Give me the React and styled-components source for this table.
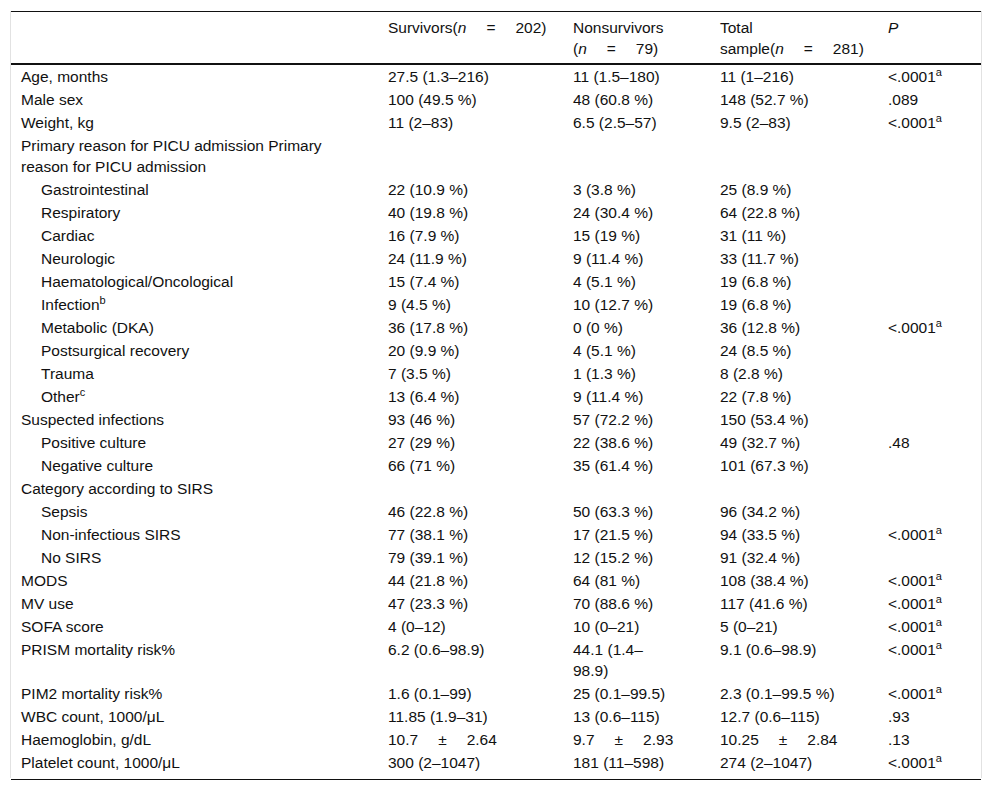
import React from 'react';
import styled, { createGlobalStyle } from 'styled-components';

const GlobalStyle = createGlobalStyle`
  body {
    margin: 0;
    background: #fff;
    font-family: "Liberation Sans", Arial, sans-serif;
    color: #111;
  }
`;

const rows = [
  { label: 'Age, months', s: '27.5 (1.3–216)', ns: '11 (1.5–180)', t: '11 (1–216)', p: '<.0001', sup: 'a' },
  { label: 'Male sex', s: '100 (49.5 %)', ns: '48 (60.8 %)', t: '148 (52.7 %)', p: '.089' },
  { label: 'Weight, kg', s: '11 (2–83)', ns: '6.5 (2.5–57)', t: '9.5 (2–83)', p: '<.0001', sup: 'a' },
  { label: 'Primary reason for PICU admission Primary reason for PICU admission' },
  { label: 'Gastrointestinal', indent: true, s: '22 (10.9 %)', ns: '3 (3.8 %)', t: '25 (8.9 %)' },
  { label: 'Respiratory', indent: true, s: '40 (19.8 %)', ns: '24 (30.4 %)', t: '64 (22.8 %)' },
  { label: 'Cardiac', indent: true, s: '16 (7.9 %)', ns: '15 (19 %)', t: '31 (11 %)' },
  { label: 'Neurologic', indent: true, s: '24 (11.9 %)', ns: '9 (11.4 %)', t: '33 (11.7 %)' },
  { label: 'Haematological/Oncological', indent: true, s: '15 (7.4 %)', ns: '4 (5.1 %)', t: '19 (6.8 %)' },
  { label: 'Infection', labelSup: 'b', indent: true, s: '9 (4.5 %)', ns: '10 (12.7 %)', t: '19 (6.8 %)' },
  { label: 'Metabolic (DKA)', indent: true, s: '36 (17.8 %)', ns: '0 (0 %)', t: '36 (12.8 %)', p: '<.0001', sup: 'a' },
  { label: 'Postsurgical recovery', indent: true, s: '20 (9.9 %)', ns: '4 (5.1 %)', t: '24 (8.5 %)' },
  { label: 'Trauma', indent: true, s: '7 (3.5 %)', ns: '1 (1.3 %)', t: '8 (2.8 %)' },
  { label: 'Other', labelSup: 'c', indent: true, s: '13 (6.4 %)', ns: '9 (11.4 %)', t: '22 (7.8 %)' },
  { label: 'Suspected infections', s: '93 (46 %)', ns: '57 (72.2 %)', t: '150 (53.4 %)' },
  { label: 'Positive culture', indent: true, s: '27 (29 %)', ns: '22 (38.6 %)', t: '49 (32.7 %)', p: '.48' },
  { label: 'Negative culture', indent: true, s: '66 (71 %)', ns: '35 (61.4 %)', t: '101 (67.3 %)' },
  { label: 'Category according to SIRS' },
  { label: 'Sepsis', indent: true, s: '46 (22.8 %)', ns: '50 (63.3 %)', t: '96 (34.2 %)' },
  { label: 'Non-infectious SIRS', indent: true, s: '77 (38.1 %)', ns: '17 (21.5 %)', t: '94 (33.5 %)', p: '<.0001', sup: 'a' },
  { label: 'No SIRS', indent: true, s: '79 (39.1 %)', ns: '12 (15.2 %)', t: '91 (32.4 %)' },
  { label: 'MODS', s: '44 (21.8 %)', ns: '64 (81 %)', t: '108 (38.4 %)', p: '<.0001', sup: 'a' },
  { label: 'MV use', s: '47 (23.3 %)', ns: '70 (88.6 %)', t: '117 (41.6 %)', p: '<.0001', sup: 'a' },
  { label: 'SOFA score', s: '4 (0–12)', ns: '10 (0–21)', t: '5 (0–21)', p: '<.0001', sup: 'a' },
  { label: 'PRISM mortality risk%', s: '6.2 (0.6–98.9)', ns: ['44.1 (1.4–', '98.9)'], t: '9.1 (0.6–98.9)', p: '<.0001', sup: 'a' },
  { label: 'PIM2 mortality risk%', s: '1.6 (0.1–99)', ns: '25 (0.1–99.5)', t: '2.3 (0.1–99.5 %)', p: '<.0001', sup: 'a' },
  { label: 'WBC count, 1000/μL', s: '11.85 (1.9–31)', ns: '13 (0.6–115)', t: '12.7 (0.6–115)', p: '.93' },
  { label: 'Haemoglobin, g/dL', s: ['10.7', '2.64'], ns: ['9.7', '2.93'], t: ['10.25', '2.84'], p: '.13', pm: true },
  { label: 'Platelet count, 1000/μL', s: '300 (2–1047)', ns: '181 (11–598)', t: '274 (2–1047)', p: '<.0001', sup: 'a' },
];

const Value = ({ v, pm }) => {
  if (!v) return null;
  if (Array.isArray(v)) {
    if (pm) {
      return (
        <>
          {v[0]}
          <Op>±</Op>
          {v[1]}
        </>
      );
    }
    return (
      <>
        {v[0]}
        <br />
        {v[1]}
      </>
    );
  }
  return v;
};

const App = () => {
  return (
    <Page>
      <GlobalStyle />
      <Frame>
        <Table>
          <colgroup>
            <col style={{ width: 367 }} />
            <col style={{ width: 185 }} />
            <col style={{ width: 147 }} />
            <col style={{ width: 168 }} />
            <col style={{ width: 103 }} />
          </colgroup>
          <thead>
            <tr>
              <Th></Th>
              <Th>
                Survivors(<I>n</I>
                <Op>=</Op>202)
              </Th>
              <Th>
                Nonsurvivors
                <br />(<I>n</I>
                <Op>=</Op>79)
              </Th>
              <Th>
                Total
                <br />
                sample(<I>n</I>
                <Op>=</Op>281)
              </Th>
              <Th>
                <I>P</I>
              </Th>
            </tr>
          </thead>
          <tbody>
            {rows.map((r) => (
              <tr key={r.label}>
                <Td $indent={r.indent}>
                  {r.label}
                  {r.labelSup && <Sup>{r.labelSup}</Sup>}
                </Td>
                <Td>
                  <Value v={r.s} pm={r.pm} />
                </Td>
                <Td>
                  <Value v={r.ns} pm={r.pm} />
                </Td>
                <Td>
                  <Value v={r.t} pm={r.pm} />
                </Td>
                <Td>
                  {r.p}
                  {r.sup && <Sup>{r.sup}</Sup>}
                </Td>
              </tr>
            ))}
          </tbody>
        </Table>
      </Frame>
      <BottomRule />
    </Page>
  );
};

export default App;

const Page = styled.div`
  padding: 11px 10px 0 10px;
`;

const Frame = styled.div`
  border-left: 1px solid #e2e2e2;
  border-right: 1px solid #e2e2e2;
  padding-bottom: 4px;
`;

const Table = styled.table`
  width: 100%;
  table-layout: fixed;
  border-collapse: collapse;
  border-top: 1px solid #111;
  font-size: 15.5px;
  line-height: 21px;
`;

const Th = styled.th`
  text-align: left;
  font-weight: normal;
  vertical-align: top;
  padding: 5px 10px 4px 10px;
  border-bottom: 2px solid #111;
`;

const Td = styled.td`
  vertical-align: top;
  padding: 1px 10px 1px ${(p) => (p.$indent ? '30px' : '10px')};
`;

const I = styled.i`
  font-style: italic;
`;

const Op = styled.span`
  padding: 0 20px;
`;

const Sup = styled.sup`
  font-size: 11px;
  line-height: 0;
  vertical-align: 6px;
`;

const BottomRule = styled.div`
  margin: 1px 1px 0 1px;
  height: 1px;
  background: #111;
`;
